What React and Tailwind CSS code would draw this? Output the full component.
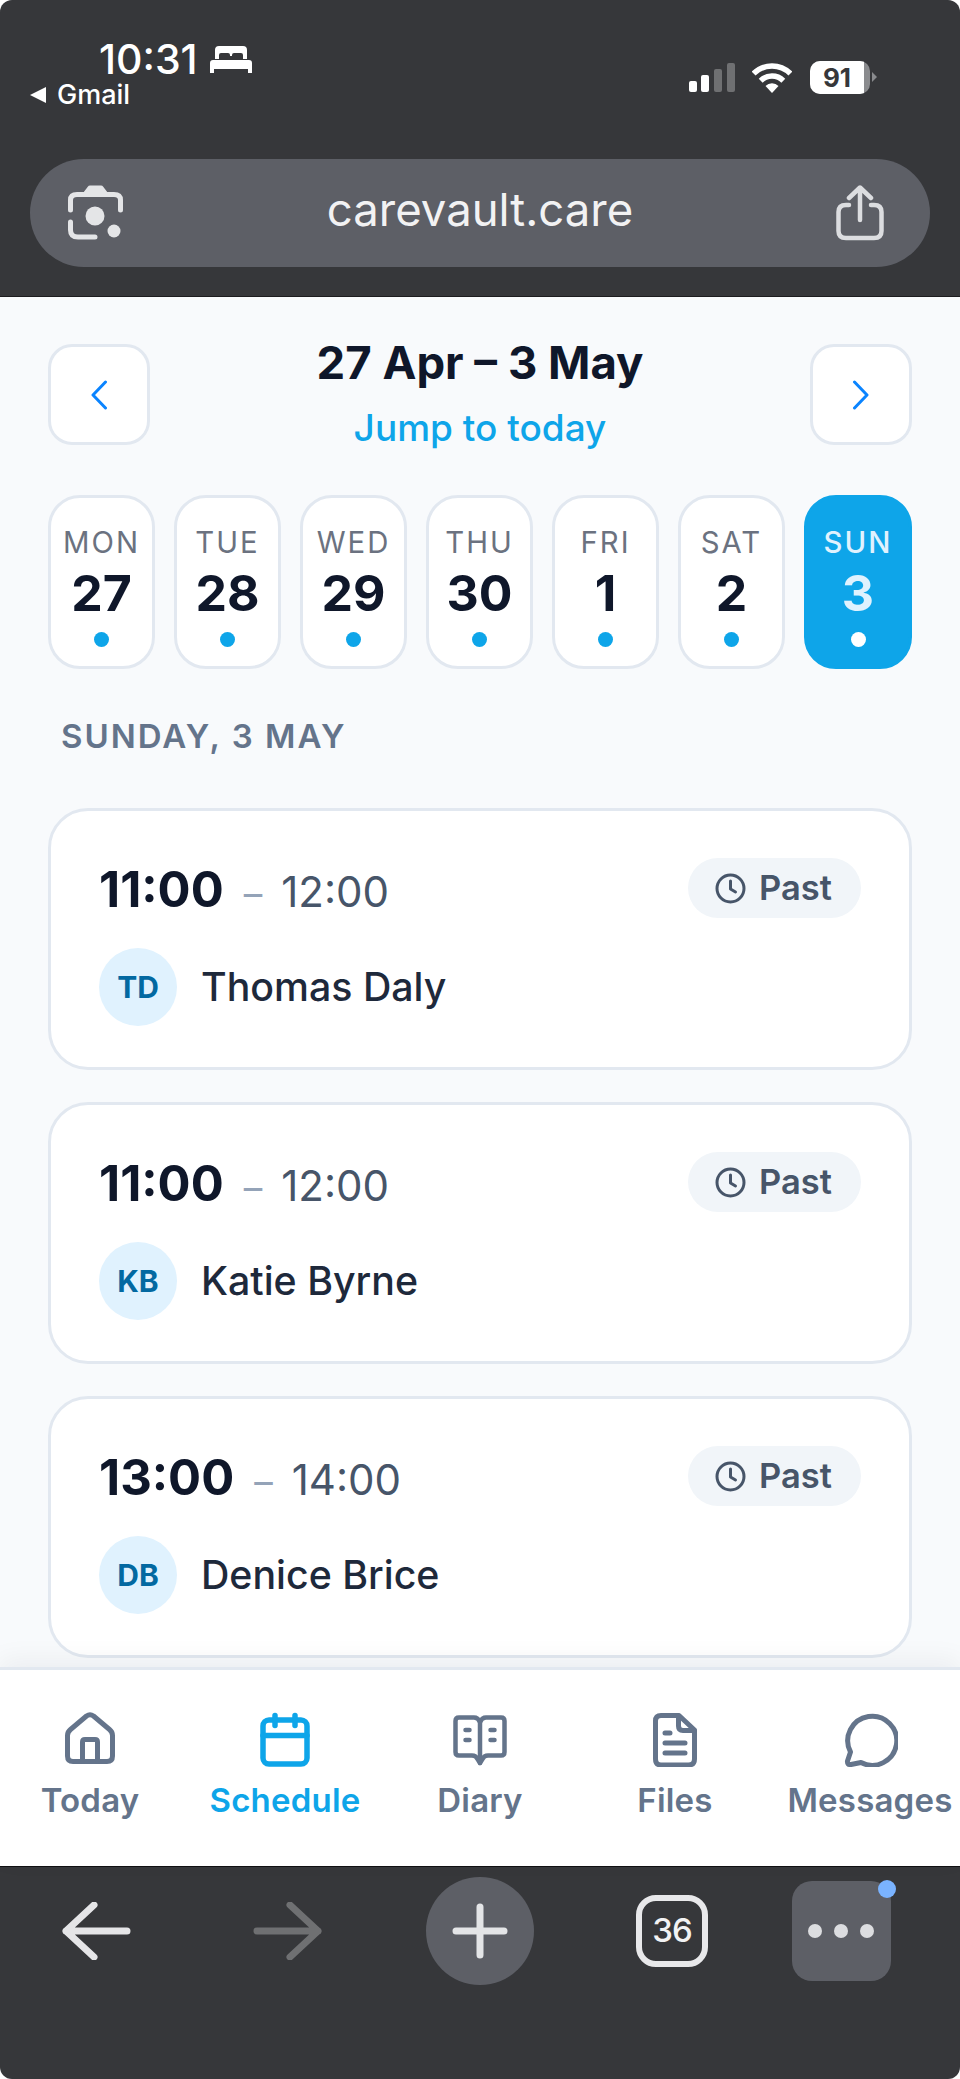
import React from 'react';

const days = [
  { name: 'MON', num: '27' },
  { name: 'TUE', num: '28' },
  { name: 'WED', num: '29' },
  { name: 'THU', num: '30' },
  { name: 'FRI', num: '1' },
  { name: 'SAT', num: '2' },
  { name: 'SUN', num: '3', active: true },
];

const visits = [
  { start: '11:00', end: '12:00', initials: 'TD', name: 'Thomas Daly' },
  { start: '11:00', end: '12:00', initials: 'KB', name: 'Katie Byrne' },
  { start: '13:00', end: '14:00', initials: 'DB', name: 'Denice Brice' },
];

const BedIcon = () => (
  <svg width="42" height="27" viewBox="0 0 42 27" fill="#fff">
    <path d="M5 13V4Q5 0 9 0H33Q37 0 37 4V13H33V9Q33 7 31 7H24Q22 7 22 9V10H20V9Q20 7 18 7H11Q9 7 9 9V13Z" />
    <path d="M3 14H39Q42 14 42 17V27H38V23H4V27H0V17Q0 14 3 14Z" />
  </svg>
);

const SignalIcon = () => (
  <svg width="46" height="29" viewBox="0 0 46 29">
    <rect x="0" y="18" width="8" height="11" rx="2" fill="#fff" />
    <rect x="12" y="12" width="8" height="17" rx="2" fill="#fff" />
    <rect x="25" y="6" width="8" height="23" rx="2" fill="#6f7072" />
    <rect x="38" y="0" width="8" height="29" rx="2" fill="#6f7072" />
  </svg>
);

const WifiIcon = () => (
  <svg width="40" height="30" viewBox="0 0 40 30" fill="none" stroke="#fff" strokeWidth="5.5">
    <path d="M1.6 10.6A26 26 0 0 1 38.4 10.6" />
    <path d="M8.7 17.7A16 16 0 0 1 31.3 17.7" />
    <path d="M20 30L13.5 23A8.8 8.8 0 0 1 26.5 23Z" fill="#fff" stroke="none" />
  </svg>
);

const LensIcon = () => (
  <svg width="56" height="56" viewBox="0 0 56 56" fill="none" stroke="#e4e5e7" strokeWidth="5" strokeLinecap="round">
    <path d="M2.5 25V15Q2.5 9.5 9 9.5H46Q52.5 9.5 52.5 15V25" />
    <path d="M2.5 37V45Q2.5 52 10 52H27" />
    <path d="M15 8L20 1.5Q20.5 0.5 22 0.5H33Q34.5 0.5 35 1.5L40 8Z" fill="#e4e5e7" stroke="none" />
    <circle cx="27" cy="31" r="9.5" fill="#e4e5e7" stroke="none" />
    <circle cx="46" cy="46" r="6.5" fill="#e4e5e7" stroke="none" />
  </svg>
);

const ShareIcon = () => (
  <svg width="48" height="56" viewBox="0 0 48 56" fill="none" stroke="#dcdde0" strokeWidth="4.5" strokeLinecap="round" strokeLinejoin="round">
    <path d="M13 20H10Q2.5 20 2.5 27V46Q2.5 53 10 53H38Q45.5 53 45.5 46V27Q45.5 20 38 20H35" />
    <path d="M24 35V3M13 13L24 2.5L35 13" />
  </svg>
);

const HomeIcon = () => (
  <svg width="56" height="56" viewBox="0 0 56 56" fill="none" stroke="currentColor" strokeWidth="5" strokeLinecap="round" strokeLinejoin="round">
    <path d="M24.5 5L8.5 18.5Q5.5 21 5.5 24.5V45Q5.5 50.5 11 50.5H45Q50.5 50.5 50.5 45V24.5Q50.5 21 47.5 18.5L31.5 5Q28 2.5 24.5 5Z" />
    <path d="M20.5 50V31Q20.5 28.5 23 28.5H33Q35.5 28.5 35.5 31V50" />
  </svg>
);

const CalendarIcon = () => (
  <svg width="56" height="56" viewBox="0 0 56 56" fill="none" stroke="currentColor" strokeWidth="5.5" strokeLinecap="round">
    <rect x="6" y="9" width="44" height="44" rx="6" />
    <path d="M6 24.5H50" />
    <path d="M18 4.5V14.5M38 4.5V14.5" />
  </svg>
);

const BookIcon = () => (
  <svg width="56" height="56" viewBox="0 0 56 56" fill="none" stroke="currentColor" strokeWidth="4.5" strokeLinecap="round" strokeLinejoin="round">
    <path d="M28 11Q26 6.5 22 6.5H7Q3.5 6.5 3.5 10V41Q3.5 44.5 7 44.5H20Q24 44.5 25.5 48L28 52L30.5 48Q32 44.5 36 44.5H49Q52.5 44.5 52.5 41V10Q52.5 6.5 49 6.5H34Q30 6.5 28 11Z" />
    <path d="M28 11V52M13.5 19H17.5M13.5 29H17.5M38.5 19H42.5M38.5 29H42.5" />
  </svg>
);

const FileIcon = () => (
  <svg width="56" height="56" viewBox="0 0 56 56" fill="none" stroke="currentColor" strokeWidth="5" strokeLinecap="round" strokeLinejoin="round">
    <path d="M14 4.5H32L47.5 19V48Q47.5 54 41.5 54H14Q8.5 54 8.5 48V10Q8.5 4.5 14 4.5Z" />
    <path d="M31.5 5V15Q31.5 19.5 36 19.5H47" />
    <path d="M18 22H23M18 32H38M18 42H38" />
  </svg>
);

const MessageIcon = () => (
  <svg width="56" height="56" viewBox="0 0 56 56" fill="none" stroke="currentColor" strokeWidth="5" strokeLinecap="round" strokeLinejoin="round">
    <path d="M19 51.5A24.5 24.5 0 1 0 8.5 41L5.5 50Q5 54 9 53.5Z" />
  </svg>
);

const tabs = [
  { label: 'Today', Icon: HomeIcon },
  { label: 'Schedule', Icon: CalendarIcon, active: true },
  { label: 'Diary', Icon: BookIcon },
  { label: 'Files', Icon: FileIcon },
  { label: 'Messages', Icon: MessageIcon },
];

const ClockIcon = () => (
  <svg width="31" height="31" viewBox="0 0 31 31" fill="none" stroke="#475569" strokeWidth="3" strokeLinecap="round" strokeLinejoin="round">
    <circle cx="15.5" cy="15.5" r="13.5" />
    <path d="M15.5 8V16L20.5 19" />
  </svg>
);

const VisitCard = ({ visit }) => (
  <div className="bg-white border-[3px] border-[#e2e8f0] rounded-[40px] pt-[47px] pb-[41px] px-[48px]">
    <div className="flex justify-between items-center h-[60px]">
      <div className="flex items-baseline pt-[7px]">
        <span className="text-[49px] leading-[60px] font-bold text-[#0f172a]">{visit.start}</span>
        <span className="text-[37px] text-[#94a3b8] ml-[20px] mr-[19px]">–</span>
        <span className="text-[42px] text-[#475569]">{visit.end}</span>
      </div>
      <div className="flex items-center h-[60px] w-[173px] pl-[27px] rounded-full bg-[#f1f5f9]">
        <ClockIcon />
        <span className="ml-[13px] text-[34.5px] font-semibold text-[#475569]">Past</span>
      </div>
    </div>
    <div className="flex items-center mt-[30px]">
      <div className="w-[78px] h-[78px] rounded-full bg-[#e0f2fe] flex items-center justify-center text-[30px] font-bold text-[#0369a1]">
        {visit.initials}
      </div>
      <span className="ml-[24px] text-[39.3px] font-medium text-[#1e293b]">{visit.name}</span>
    </div>
  </div>
);

export default function App() {
  return (
    <div className="w-[960px] h-[2079px] flex flex-col overflow-hidden rounded-[12px] bg-[#f8fafc] font-['Inter',sans-serif]">
      {/* browser top */}
      <div className="h-[297px] shrink-0 bg-[#36373a] border-b border-b-[#1c1c1e] px-[30px]">
        <div className="h-[159px] flex justify-between">
          <div className="pt-[38px]">
            <div className="flex items-center pl-[69px] h-[42px] text-white">
              <span className="text-[41px] leading-[42px] font-medium">10:31</span>
              <span className="ml-[12px]"><BedIcon /></span>
            </div>
            <div className="flex items-center text-white">
              <span className="w-0 h-0 border-y-[8px] border-y-transparent border-r-[16px] border-r-white"></span>
              <span className="ml-[11px] text-[27px] leading-[30px] font-medium">Gmail</span>
            </div>
          </div>
          <div className="flex items-start pt-[61px] pr-[53px]">
            <span className="mt-[2px]"><SignalIcon /></span>
            <span className="ml-[17px] mt-[2px]"><WifiIcon /></span>
            <div className="ml-[18px] w-[60px] h-[33px] rounded-[10px] overflow-hidden bg-[#8a8b8e] flex">
              <div className="w-[54px] bg-white flex items-center justify-center text-[26px] font-bold text-[#36373a]">91</div>
            </div>
            <span className="ml-[2px] mt-[11px] w-0 h-0 border-y-[5px] border-y-transparent border-l-[5px] border-l-[#8a8b8e]"></span>
          </div>
        </div>
        <div className="h-[108px] rounded-[54px] bg-[#5d5f66] flex items-center justify-between pl-[38px] pr-[46px]">
          <LensIcon />
          <span className="text-[45.5px] text-[#f2f2f3] mb-[5px]">carevault.care</span>
          <ShareIcon />
        </div>
      </div>

      {/* page */}
      <div className="flex-1 min-h-0 overflow-hidden px-[48px]">
        <div className="flex justify-between h-[101px] mt-[47px]">
          <button className="w-[102px] h-[101px] rounded-[24px] bg-white border-[3px] border-[#e2e8f0] flex items-center justify-center">
            <svg width="18" height="30" viewBox="0 0 18 30" fill="none" stroke="#0a84ff" strokeWidth="3" strokeLinecap="round" strokeLinejoin="round">
              <path d="M15.5 2L3 15L15.5 28" />
            </svg>
          </button>
          <div className="flex flex-col items-center">
            <div className="text-[45.5px] leading-[37px] font-bold text-[#0f172a]">27 Apr – 3 May</div>
            <div className="mt-[25px] text-[37px] leading-[44px] font-medium text-[#0ea5e9]">Jump to today</div>
          </div>
          <button className="w-[102px] h-[101px] rounded-[24px] bg-white border-[3px] border-[#e2e8f0] flex items-center justify-center">
            <svg width="18" height="30" viewBox="0 0 18 30" fill="none" stroke="#0a84ff" strokeWidth="3" strokeLinecap="round" strokeLinejoin="round">
              <path d="M2.5 2L15 15L2.5 28" />
            </svg>
          </button>
        </div>

        <div className="flex gap-[19px] mt-[50px]">
          {days.map((d) => (
            <div
              key={d.name}
              className={
                d.active
                  ? 'w-[108px] shrink-0 h-[174px] rounded-[32px] bg-[#0ea5e9] border-[3px] border-[#0ea5e9] flex flex-col items-center pt-[27px]'
                  : 'flex-1 h-[174px] rounded-[32px] bg-white border-[3px] border-[#e2e8f0] flex flex-col items-center pt-[27px]'
              }
            >
              <span className={d.active ? 'text-[29.3px] leading-[36px] font-medium tracking-[2px] text-[#e0f2fe]' : 'text-[29.3px] leading-[36px] tracking-[2px] text-[#6b7280]'}>
                {d.name}
              </span>
              <span className={d.active ? 'mt-[7px] text-[50px] leading-[50px] font-bold text-[#e0f2fe]' : 'mt-[7px] text-[50px] leading-[50px] font-bold text-[#0f172a]'}>
                {d.num}
              </span>
              <span className={d.active ? 'mt-[14px] w-[15px] h-[15px] rounded-full bg-white' : 'mt-[14px] w-[15px] h-[15px] rounded-full bg-[#0ea5e9]'}></span>
            </div>
          ))}
        </div>

        <div className="mt-[47px] pl-[13px] text-[33px] leading-[40px] font-semibold tracking-[2px] text-[#64748b]">
          SUNDAY, 3 MAY
        </div>

        <div className="flex flex-col gap-[32px] mt-[52px]">
          {visits.map((v) => (
            <VisitCard key={v.initials} visit={v} />
          ))}
        </div>
      </div>

      {/* app tabs */}
      <div className="h-[199px] shrink-0 bg-white border-t-[3px] border-t-[#e2e8f0] shadow-[0_-8px_24px_rgba(15,23,42,0.05)] flex justify-center pt-[41px] relative">
        {tabs.map(({ label, Icon, active }) => (
          <div key={label} className={active ? 'w-[195px] shrink-0 flex flex-col items-center text-[#0ea5e9]' : 'w-[195px] shrink-0 flex flex-col items-center text-[#64748b]'}>
            <Icon />
            <span className="mt-[13px] text-[33px] leading-[40px] font-semibold tracking-[0.2px] whitespace-nowrap">{label}</span>
          </div>
        ))}
      </div>

      {/* browser bottom */}
      <div className="h-[213px] shrink-0 bg-[#36373a] border-t border-t-[#111113] pt-[10px] grid grid-cols-5 items-start">
        <div className="h-[108px] flex items-center justify-center">
          <svg width="70" height="58" viewBox="0 0 70 58" fill="none" stroke="#e5e5e7" strokeWidth="7" strokeLinecap="round" strokeLinejoin="round">
            <path d="M33 3L5 29L33 55M5 29H66" />
          </svg>
        </div>
        <div className="h-[108px] flex items-center justify-center">
          <svg width="70" height="58" viewBox="0 0 70 58" fill="none" stroke="#6f7072" strokeWidth="7" strokeLinecap="round" strokeLinejoin="round">
            <path d="M37 3L65 29L37 55M65 29H4" />
          </svg>
        </div>
        <div className="h-[108px] flex items-center justify-center">
          <div className="w-[108px] h-[108px] rounded-full bg-[#5d5f66] flex items-center justify-center">
            <svg width="56" height="56" viewBox="0 0 56 56" fill="none" stroke="#e4e5e7" strokeWidth="7" strokeLinecap="round">
              <path d="M28 4V52M4 28H52" />
            </svg>
          </div>
        </div>
        <div className="h-[108px] flex items-center justify-center">
          <div className="w-[72px] h-[72px] rounded-[20px] border-[6px] border-[#e8e8ea] flex items-center justify-center text-[33px] font-medium text-[#f2f2f3] tracking-[-1px]">
            36
          </div>
        </div>
        <div className="h-[108px] flex items-center justify-center">
          <div className="relative w-[99px] h-[100px] mr-[46px] rounded-[20px] bg-[#5d5f66] flex items-center justify-center gap-[12px]">
            <span className="w-[14px] h-[14px] rounded-full bg-[#dcdde0]"></span>
            <span className="w-[14px] h-[14px] rounded-full bg-[#dcdde0]"></span>
            <span className="w-[14px] h-[14px] rounded-full bg-[#dcdde0]"></span>
            <span className="absolute -top-[1px] -right-[5px] w-[18px] h-[18px] rounded-full bg-[#7ab3ff]"></span>
          </div>
        </div>
      </div>
    </div>
  );
}
